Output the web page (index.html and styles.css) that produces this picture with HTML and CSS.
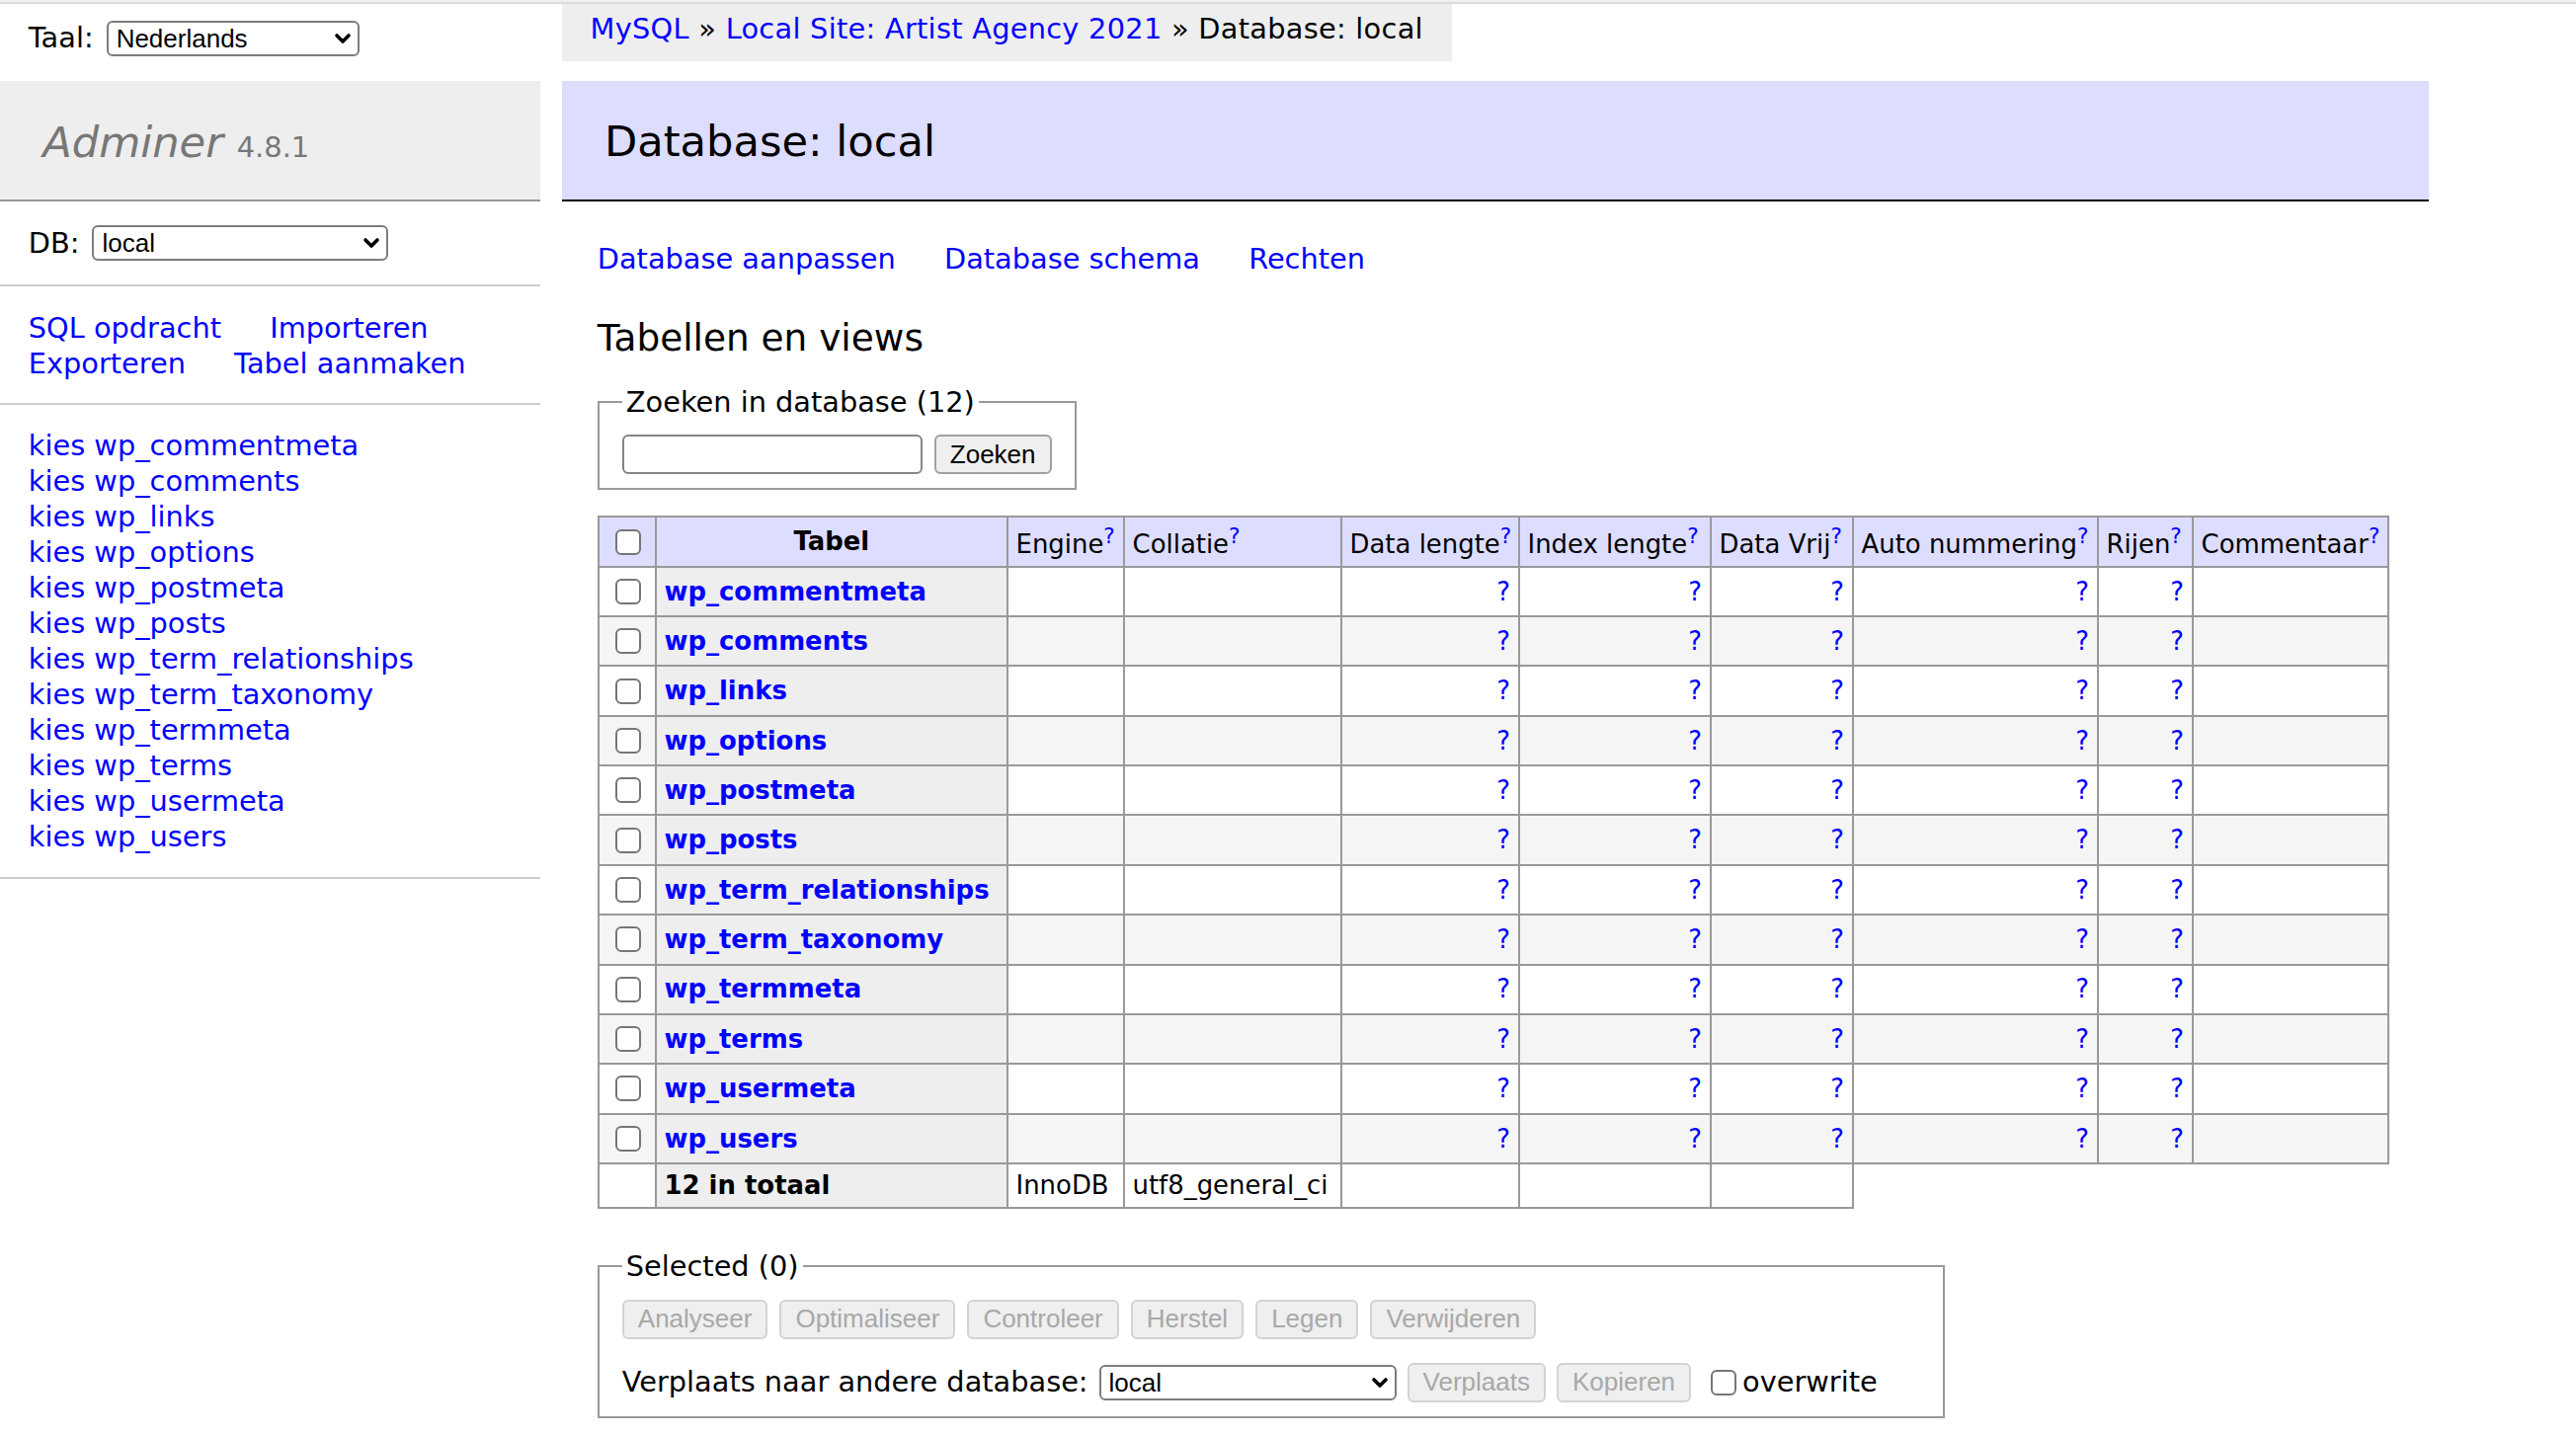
FILE: index.html
```html
<!DOCTYPE html>
<html lang="nl">
<head>
<meta charset="utf-8">
<title>Database: local - Adminer</title>
<link rel="stylesheet" href="styles.css">
</head>
<body>
<div class="chrome"></div>
<div class="page">
  <form class="lang">
    <span>Taal:</span>
    <span class="select-wrap w-lang"><select><option>Nederlands</option></select><svg class="chev" viewBox="0 0 18 12"><path d="M3 3 L9 9 L15 3"/></svg></span>
  </form>

  <p class="breadcrumb"><a href="#">MySQL</a> » <a href="#">Local Site: Artist Agency 2021</a> » Database: local</p>

  <aside class="menu">
    <h1><a href="#" class="brand">Adminer</a> <span class="version">4.8.1</span></h1>
    <p class="dbs"><span>DB:</span>
      <span class="select-wrap w-db"><select><option>local</option></select><svg class="chev" viewBox="0 0 18 12"><path d="M3 3 L9 9 L15 3"/></svg></span>
    </p>
    <p class="links"><a href="#">SQL opdracht</a> <a href="#">Importeren</a> <a href="#">Exporteren</a> <a href="#">Tabel aanmaken</a></p>
    <ul class="tables">
      <li><a href="#">kies</a> <a href="#">wp_commentmeta</a></li>
      <li><a href="#">kies</a> <a href="#">wp_comments</a></li>
      <li><a href="#">kies</a> <a href="#">wp_links</a></li>
      <li><a href="#">kies</a> <a href="#">wp_options</a></li>
      <li><a href="#">kies</a> <a href="#">wp_postmeta</a></li>
      <li><a href="#">kies</a> <a href="#">wp_posts</a></li>
      <li><a href="#">kies</a> <a href="#">wp_term_relationships</a></li>
      <li><a href="#">kies</a> <a href="#">wp_term_taxonomy</a></li>
      <li><a href="#">kies</a> <a href="#">wp_termmeta</a></li>
      <li><a href="#">kies</a> <a href="#">wp_terms</a></li>
      <li><a href="#">kies</a> <a href="#">wp_usermeta</a></li>
      <li><a href="#">kies</a> <a href="#">wp_users</a></li>
    </ul>
  </aside>

  <main class="content">
    <h2>Database: local</h2>
    <p class="links"><a href="#">Database aanpassen</a> <a href="#">Database schema</a> <a href="#">Rechten</a></p>
    <h3>Tabellen en views</h3>

    <form>
      <fieldset class="search">
        <legend>Zoeken in database (12)</legend>
        <div class="row">
          <input type="search" class="txt">
          <button type="button" class="btn">Zoeken</button>
        </div>
      </fieldset>
    </form>

    <table class="tbl">
      <colgroup>
        <col class="c-chk"><col class="c-name"><col class="c-engine"><col class="c-coll"><col class="c-dlen">
        <col class="c-ilen"><col class="c-free"><col class="c-auto"><col class="c-rows"><col class="c-comm">
      </colgroup>
      <thead>
        <tr>
          <td><input type="checkbox" class="cb"></td>
          <th>Tabel</th>
          <td>Engine<a href="#" class="help"><sup>?</sup></a></td>
          <td>Collatie<a href="#" class="help"><sup>?</sup></a></td>
          <td>Data lengte<a href="#" class="help"><sup>?</sup></a></td>
          <td>Index lengte<a href="#" class="help"><sup>?</sup></a></td>
          <td>Data Vrij<a href="#" class="help"><sup>?</sup></a></td>
          <td>Auto nummering<a href="#" class="help"><sup>?</sup></a></td>
          <td>Rijen<a href="#" class="help"><sup>?</sup></a></td>
          <td>Commentaar<a href="#" class="help"><sup>?</sup></a></td>
        </tr>
      </thead>
      <tbody>
        <tr><td><input type="checkbox" class="cb"></td><th><a href="#">wp_commentmeta</a></th><td></td><td></td><td class="num"><a href="#">?</a></td><td class="num"><a href="#">?</a></td><td class="num"><a href="#">?</a></td><td class="num"><a href="#">?</a></td><td class="num"><a href="#">?</a></td><td></td></tr>
        <tr><td><input type="checkbox" class="cb"></td><th><a href="#">wp_comments</a></th><td></td><td></td><td class="num"><a href="#">?</a></td><td class="num"><a href="#">?</a></td><td class="num"><a href="#">?</a></td><td class="num"><a href="#">?</a></td><td class="num"><a href="#">?</a></td><td></td></tr>
        <tr><td><input type="checkbox" class="cb"></td><th><a href="#">wp_links</a></th><td></td><td></td><td class="num"><a href="#">?</a></td><td class="num"><a href="#">?</a></td><td class="num"><a href="#">?</a></td><td class="num"><a href="#">?</a></td><td class="num"><a href="#">?</a></td><td></td></tr>
        <tr><td><input type="checkbox" class="cb"></td><th><a href="#">wp_options</a></th><td></td><td></td><td class="num"><a href="#">?</a></td><td class="num"><a href="#">?</a></td><td class="num"><a href="#">?</a></td><td class="num"><a href="#">?</a></td><td class="num"><a href="#">?</a></td><td></td></tr>
        <tr><td><input type="checkbox" class="cb"></td><th><a href="#">wp_postmeta</a></th><td></td><td></td><td class="num"><a href="#">?</a></td><td class="num"><a href="#">?</a></td><td class="num"><a href="#">?</a></td><td class="num"><a href="#">?</a></td><td class="num"><a href="#">?</a></td><td></td></tr>
        <tr><td><input type="checkbox" class="cb"></td><th><a href="#">wp_posts</a></th><td></td><td></td><td class="num"><a href="#">?</a></td><td class="num"><a href="#">?</a></td><td class="num"><a href="#">?</a></td><td class="num"><a href="#">?</a></td><td class="num"><a href="#">?</a></td><td></td></tr>
        <tr><td><input type="checkbox" class="cb"></td><th><a href="#">wp_term_relationships</a></th><td></td><td></td><td class="num"><a href="#">?</a></td><td class="num"><a href="#">?</a></td><td class="num"><a href="#">?</a></td><td class="num"><a href="#">?</a></td><td class="num"><a href="#">?</a></td><td></td></tr>
        <tr><td><input type="checkbox" class="cb"></td><th><a href="#">wp_term_taxonomy</a></th><td></td><td></td><td class="num"><a href="#">?</a></td><td class="num"><a href="#">?</a></td><td class="num"><a href="#">?</a></td><td class="num"><a href="#">?</a></td><td class="num"><a href="#">?</a></td><td></td></tr>
        <tr><td><input type="checkbox" class="cb"></td><th><a href="#">wp_termmeta</a></th><td></td><td></td><td class="num"><a href="#">?</a></td><td class="num"><a href="#">?</a></td><td class="num"><a href="#">?</a></td><td class="num"><a href="#">?</a></td><td class="num"><a href="#">?</a></td><td></td></tr>
        <tr><td><input type="checkbox" class="cb"></td><th><a href="#">wp_terms</a></th><td></td><td></td><td class="num"><a href="#">?</a></td><td class="num"><a href="#">?</a></td><td class="num"><a href="#">?</a></td><td class="num"><a href="#">?</a></td><td class="num"><a href="#">?</a></td><td></td></tr>
        <tr><td><input type="checkbox" class="cb"></td><th><a href="#">wp_usermeta</a></th><td></td><td></td><td class="num"><a href="#">?</a></td><td class="num"><a href="#">?</a></td><td class="num"><a href="#">?</a></td><td class="num"><a href="#">?</a></td><td class="num"><a href="#">?</a></td><td></td></tr>
        <tr><td><input type="checkbox" class="cb"></td><th><a href="#">wp_users</a></th><td></td><td></td><td class="num"><a href="#">?</a></td><td class="num"><a href="#">?</a></td><td class="num"><a href="#">?</a></td><td class="num"><a href="#">?</a></td><td class="num"><a href="#">?</a></td><td></td></tr>
        <tr class="total"><td></td><th>12 in totaal</th><td>InnoDB</td><td>utf8_general_ci</td><td></td><td></td><td></td></tr>
      </tbody>
    </table>

    <fieldset class="selected">
      <legend>Selected (0)</legend>
      <div class="row">
        <button type="button" class="btn" disabled>Analyseer</button>
        <button type="button" class="btn" disabled>Optimaliseer</button>
        <button type="button" class="btn" disabled>Controleer</button>
        <button type="button" class="btn" disabled>Herstel</button>
        <button type="button" class="btn" disabled>Legen</button>
        <button type="button" class="btn" disabled>Verwijderen</button>
      </div>
      <div class="row move">
        <span>Verplaats naar andere database:</span>
        <span class="select-wrap w-move"><select><option>local</option></select><svg class="chev" viewBox="0 0 18 12"><path d="M3 3 L9 9 L15 3"/></svg></span>
        <button type="button" class="btn" disabled>Verplaats</button>
        <button type="button" class="btn" disabled>Kopieren</button>
        <label class="check"><input type="checkbox" class="cb">overwrite</label>
      </div>
    </fieldset>
  </main>
</div>
</body>
</html>
```

FILE: styles.css
```css
html { background: #fff; }
body {
  margin: 0;
  color: #000;
  font: 28.8px/1.25 "DejaVu Sans", Verdana, sans-serif;
}
a { color: #00f; text-decoration: none; }

.chrome {
  height: 4px;
  border-top: 2px solid #eef0f2;
  background: #d9dcdf;
  box-sizing: border-box;
}

.page {
  display: grid;
  grid-template-columns: 547.2px max-content;
  grid-template-rows: 57.6px auto;
  column-gap: 57.6px;
  align-items: start;
}

/* language */
.lang {
  grid-column: 1;
  grid-row: 1;
  margin: 0;
  padding: 8.64px 28.8px 0;
  display: flex;
  align-items: center;
  gap: 13px;
  height: 60.48px;
  box-sizing: border-box;
  line-height: 51.84px;
}

/* breadcrumb */
.breadcrumb {
  grid-column: 2;
  grid-row: 1;
  margin: 0 0 0 -36px;
  width: max-content;
  height: 57.6px;
  line-height: 51.84px;
  padding: 0 28.8px;
  background: #eee;
  white-space: nowrap;
  letter-spacing: 0.28px;
  box-sizing: border-box;
}

/* selects */
.select-wrap { position: relative; display: inline-block; }
.select-wrap select {
  -webkit-appearance: none;
  appearance: none;
  display: block;
  margin: 0;
  height: 36px;
  padding: 0 40px 0 8px;
  font: 26px "Liberation Sans", Arial, sans-serif;
  color: #000;
  background: #fff;
  border: 2px solid #7d7d7d;
  border-radius: 6px;
  box-sizing: border-box;
}
.w-lang select { width: 256px; }
.w-db select { width: 300px; }
.w-move select { width: 301px; }
.chev {
  position: absolute;
  right: 8px;
  top: 50%;
  width: 18px;
  height: 12px;
  margin-top: -6px;
  pointer-events: none;
}
.chev path {
  fill: none;
  stroke: #000;
  stroke-width: 3.6;
  stroke-linecap: round;
  stroke-linejoin: round;
}

/* sidebar */
.menu {
  grid-column: 1;
  grid-row: 2;
  margin-top: 20px;
  padding-bottom: 60px;
}
.menu h1 {
  margin: 0;
  padding: 37.5px 43.2px 31.6px;
  box-sizing: content-box;
  height: 51px;
  font-size: 43.2px;
  line-height: 51px;
  font-weight: normal;
  color: #777;
  background: #eee;
  border-bottom: 2px solid #999;
}
.brand { color: #777; font-style: italic; }
.version { color: #777; font-size: 67%; line-height: 1; }

.dbs {
  margin: 0;
  padding: 23.04px 28.8px;
  display: flex;
  align-items: center;
  gap: 13px;
  line-height: 38px;
  border-bottom: 2px solid #ccc;
}
.menu .links {
  margin: 0;
  padding: 24px 28.8px 22px;
  line-height: 36px;
  border-bottom: 2px solid #ccc;
}
.links a { margin-right: 40px; white-space: nowrap; }
.tables {
  margin: 0;
  padding: 23.04px 28.8px;
  list-style: none;
  line-height: 36px;
  white-space: nowrap;
  border-bottom: 2px solid #ccc;
}

/* content */
.content {
  grid-column: 2;
  grid-row: 2;
  padding: 20px 40px 40px 0;
}
.content h2 {
  margin: 0 0 40px -36px;
  padding: 36px 43.2px 33.1px;
  font-size: 43.2px;
  line-height: 51px;
  font-weight: normal;
  color: #000;
  background: #ddf;
  border-bottom: 2px solid #000;
}
.content .links { margin: 0; line-height: 36px; }
.content h3 {
  margin: 39.5px 0 0;
  font-size: 37.44px;
  line-height: 46.8px;
  font-weight: normal;
}
.content form { margin: 0; }

fieldset {
  margin: 0;
  border: 2px solid #999;
  padding: 15px 23.04px 14.4px;
  min-width: 0;
}
legend { padding: 0 4px; line-height: 36px; }
.search { margin-top: 23.04px; width: max-content; }
.selected {
  margin-top: 40px;
  width: 1364px;
  box-sizing: border-box;
  padding-top: 16px;
}
.row { display: flex; align-items: center; gap: 12px; }
.row.move { margin-top: 24px; gap: 11px; }

.txt {
  width: 304px;
  height: 40px;
  margin: 0;
  border: 2px solid #858585;
  border-radius: 6px;
  background: #fff;
  box-sizing: border-box;
  font: 26px "Liberation Sans", Arial, sans-serif;
}
.btn {
  height: 40px;
  margin: 0;
  padding: 0 14px;
  font: 26px "Liberation Sans", Arial, sans-serif;
  color: #000;
  background: #efefef;
  border: 2px solid #a0a0a0;
  border-radius: 6px;
  box-sizing: border-box;
}
.btn:disabled {
  color: #a8a8a8;
  border-color: #d3d3d3;
  background: #efefef;
}

.cb {
  -webkit-appearance: none;
  appearance: none;
  display: inline-block;
  width: 26px;
  height: 26px;
  margin: 6px 6px 6px 8px;
  border: 2px solid #767676;
  border-radius: 6px;
  background: #fff;
  vertical-align: middle;
  box-sizing: border-box;
}
.check { display: flex; align-items: center; }
.check .cb { margin: 0 6px 0 9px; }

/* table */
.tbl {
  margin: 26px 40px 0 0;
  border-collapse: collapse;
  table-layout: fixed;
  width: 1812px;
  font-size: 25.92px;
  line-height: 1.25;
}
.tbl td, .tbl th {
  border: 2px solid #999;
  padding: 5.18px 7.78px;
  white-space: nowrap;
  overflow: visible;
}
.tbl th { background: #eee; text-align: left; }
.tbl thead td, .tbl thead th { background: #ddf; }
.tbl thead th { text-align: center; padding: 5.18px 12.96px; }
.tbl tbody tr:nth-child(2n) { background: #f5f5f5; }
.tbl tbody th { background: #eee; }
.num { text-align: right; }
.help sup { color: #00f; }

.c-chk { width: 58px; }
.c-name { width: 356px; }
.c-engine { width: 118px; }
.c-coll { width: 220px; }
.c-dlen { width: 180px; }
.c-ilen { width: 194px; }
.c-free { width: 144px; }
.c-auto { width: 248px; }
.c-rows { width: 96px; }
.c-comm { width: 198px; }
```
